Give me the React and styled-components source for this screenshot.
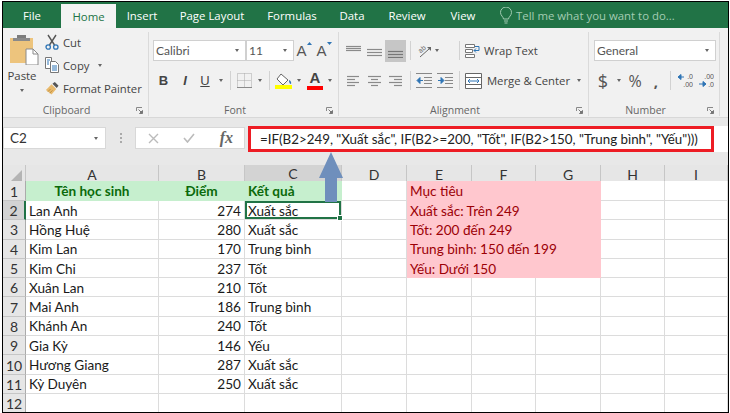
import styled, { createGlobalStyle } from "styled-components";

const GREEN = "#217346";

const columns = ["A", "B", "C", "D", "E", "F", "G", "H", "I"];
const template = "23px 133px 86px 97px 65px 65px 64px 65px 64px 63px";

const students = [
  ["Lan Anh", 274, "Xuất sắc"],
  ["Hồng Huệ", 280, "Xuất sắc"],
  ["Kim Lan", 170, "Trung bình"],
  ["Kim Chi", 237, "Tốt"],
  ["Xuân Lan", 210, "Tốt"],
  ["Mai Anh", 186, "Trung bình"],
  ["Khánh An", 240, "Tốt"],
  ["Gia Kỳ", 146, "Yếu"],
  ["Hương Giang", 287, "Xuất sắc"],
  ["Kỳ Duyên", 250, "Xuất sắc"],
];

const targets = [
  "Xuất sắc: Trên 249",
  "Tốt: 200 đến 249",
  "Trung bình: 150 đến 199",
  "Yếu: Dưới 150",
];

const GlobalStyle = createGlobalStyle`
  html, body {
    margin: 0;
    padding: 0;
    background: #fff;
  }
`;

const Frame = styled.div`
  position: relative;
  box-sizing: border-box;
  width: 727px;
  height: 412px;
  margin: 1px 0 0 2px;
  border: 1px solid #000;
  overflow: hidden;
  background: #fff;
  font-family: "Open Sans", sans-serif;
`;

const TabBar = styled.div`
  display: flex;
  height: 26px;
  background: ${GREEN};
`;

const Tab = styled.div`
  width: ${(p) => p.$w}px;
  margin-top: ${(p) => (p.$active ? "2px" : "0")};
  display: flex;
  align-items: center;
  justify-content: center;
  font-size: 11.4px;
  color: ${(p) => (p.$active ? GREEN : "#fff")};
  background: ${(p) => (p.$active ? "#f3f3f3" : "transparent")};
`;

const TellMe = styled.div`
  display: flex;
  align-items: center;
  gap: 3px;
  margin-left: 11px;
  font-size: 11.4px;
  color: #a3ccb3;
`;

const Ribbon = styled.div`
  box-sizing: border-box;
  display: flex;
  height: 90px;
  padding: 4px 0 1px;
  background: #f1f1f1;
  border-bottom: 1px solid #d8d8d8;
`;

const Group = styled.div`
  box-sizing: border-box;
  width: ${(p) => p.$w}px;
  margin-right: 1px;
  display: flex;
  flex-direction: column;
  border-right: 1px solid #dadada;
`;

const GroupBody = styled.div`
  flex: 1;
  display: flex;
  flex-direction: column;
  gap: 9px;
  padding: 8px 0 0 ${(p) => p.$pl ?? 3}px;
`;

const ClipboardBody = styled.div`
  flex: 1;
  display: flex;
`;

const PasteButton = styled.div`
  width: 42px;
  display: flex;
  flex-direction: column;
  align-items: center;
  padding-top: 2px;
  font-size: 11.4px;
  color: #444;
  line-height: 15px;
  gap: 6px;

  span {
    margin: -1px 4px 0 0;
  }
`;

const PasteInner = styled.div`
  display: flex;
  flex-direction: column;
  align-items: center;
  gap: 4px;
`;

const SmallStack = styled.div`
  display: flex;
  flex-direction: column;
  gap: 7px;
  padding-top: 2px;
`;

const SmallButton = styled.div`
  display: flex;
  align-items: center;
  height: 16px;
  gap: 4px;
  font-size: 11.3px;
  color: #444;
  white-space: nowrap;
`;

const Row = styled.div`
  display: flex;
  align-items: center;
  height: ${(p) => p.$h || 21}px;
`;

const Slot = styled.div`
  width: ${(p) => p.$w}px;
  height: ${(p) => (p.$active ? "22px" : "auto")};
  flex-shrink: 0;
  display: flex;
  align-items: center;
  justify-content: center;
  background: ${(p) => (p.$active ? "#c6c6c6" : "transparent")};
`;

const Combo = styled.div`
  box-sizing: border-box;
  width: ${(p) => p.$w}px;
  height: 21px;
  flex-shrink: 0;
  margin-left: ${(p) => p.$ml || 0}px;
  display: flex;
  align-items: center;
  justify-content: space-between;
  padding: 0 6px 0 2px;
  background: #fff;
  border: 1px solid #d0d0d0;
  font-family: "Lato", sans-serif;
  font-size: 12px;
  color: #555;
`;

const Caret = styled.div`
  width: 0;
  height: 0;
  border-left: 2.5px solid transparent;
  border-right: 2.5px solid transparent;
  border-top: 3px solid #666;
  flex-shrink: 0;
`;

const PasteCaret = styled(Caret)`
  margin-right: 4px;
`;

const VDivider = styled.div`
  width: 1px;
  height: 19px;
  background: #d2d2d2;
`;

const FontButton = styled.span`
  font-family: "Liberation Sans", sans-serif;
  font-size: ${(p) => p.$size || 13}px;
  font-weight: ${(p) => (p.$bold ? 700 : 400)};
  font-style: ${(p) => (p.$italic ? "italic" : "normal")};
  text-decoration: ${(p) => (p.$under ? "underline" : "none")};
  color: #444;
`;

const GrowButton = styled.div`
  display: flex;
  align-items: flex-start;
  font-family: "Liberation Sans", sans-serif;
  font-size: 15px;
  color: #555;
`;

const ColorStack = styled.div`
  display: flex;
  flex-direction: column;
  align-items: center;
  height: 19px;

  span {
    line-height: 14px;
  }

  svg {
    display: block;
    margin-top: 1px;
  }
`;

const NumberMark = styled.span`
  font-family: "Open Sans", sans-serif;
  font-size: ${(p) => p.$size || 14}px;
  font-weight: ${(p) => (p.$bold ? 700 : 400)};
  color: #555;
`;

const WrapLabel = styled.span`
  margin-left: 1px;
  font-size: 11.3px;
  color: #444;
  white-space: nowrap;
`;

const LabelRow = styled.div`
  display: flex;
  align-items: center;
  height: 12px;
`;

const GroupLabel = styled.div`
  flex: 1;
  text-align: center;
  font-size: 10.5px;
  color: #666;
`;

const LauncherSlot = styled.div`
  width: 18px;
  display: flex;
  justify-content: center;
`;

const FormulaBar = styled.div`
  box-sizing: border-box;
  height: 47px;
  display: flex;
  align-items: flex-start;
  padding-top: 9px;
  background: #e8e8e8;
`;

const NameBox = styled.div`
  box-sizing: border-box;
  width: 103px;
  height: 22px;
  display: flex;
  align-items: center;
  justify-content: space-between;
  padding: 0 7px 0 6px;
  background: #fff;
  font-family: "Lato", sans-serif;
  font-size: 13.5px;
  color: #333;
  border: 1px solid #d8d8d8;
`;

const Dots = styled.div`
  width: 29px;
  height: 22px;
  display: flex;
  flex-direction: column;
  align-items: center;
  justify-content: center;
  gap: 2px;

  i {
    width: 2px;
    height: 2px;
    background: #aaa;
  }
`;

const FxBox = styled.div`
  box-sizing: border-box;
  width: 110px;
  height: 22px;
  display: flex;
  align-items: center;
  justify-content: space-between;
  padding: 0 11px 0 12px;
  background: #fff;
  border: 1px solid #d8d8d8;
`;

const FxMark = styled.span`
  font-family: "Liberation Serif", serif;
  font-style: italic;
  font-weight: 700;
  font-size: 16px;
  color: #666;
`;

const FormulaField = styled.div`
  flex: 1;
  margin: -1px 0 0 3px;
  height: 26px;
  background: #fff;
`;

const FormulaBox = styled.div`
  box-sizing: border-box;
  width: 466px;
  height: 26px;
  display: flex;
  align-items: center;
  padding-left: 9px;
  border: 3px solid #ed1c24;
  font-family: "Lato", sans-serif;
  font-size: 13.35px;
  color: #222;
  white-space: nowrap;
`;

const SheetRow = styled.div`
  display: grid;
  grid-template-columns: ${template};
  height: ${(p) => p.$h || 19.3}px;
`;

const Corner = styled.div`
  display: flex;
  align-items: flex-end;
  justify-content: flex-end;
  padding: 0 3px 3px 0;
  background: #e6e6e6;
  border-right: 1px solid #c6c6c6;
  border-bottom: 1px solid #ababab;
`;

const ColHead = styled.div`
  box-sizing: border-box;
  display: flex;
  align-items: center;
  justify-content: center;
  padding-bottom: 1px;
  font-family: "Lato", sans-serif;
  font-size: 14px;
  color: #333;
  background: ${(p) => (p.$selected ? "#d3d3d3" : "#e6e6e6")};
  border-right: 1px solid #c6c6c6;
  border-bottom: ${(p) => (p.$selected ? `2px solid ${GREEN}` : "1px solid #ababab")};
`;

const RowHead = styled.div`
  box-sizing: border-box;
  display: flex;
  align-items: center;
  justify-content: center;
  padding-top: 1px;
  font-family: "Lato", sans-serif;
  font-size: 14px;
  color: #333;
  background: ${(p) => (p.$selected ? "#d3d3d3" : "#e6e6e6")};
  border-right: ${(p) => (p.$selected ? `2px solid ${GREEN}` : "1px solid #ababab")};
  border-bottom: 1px solid #c6c6c6;
`;

const Cell = styled.div`
  box-sizing: border-box;
  position: relative;
  grid-column: span ${(p) => p.$span || 1};
  display: flex;
  align-items: center;
  justify-content: ${(p) => (p.$align === "right" ? "flex-end" : p.$align === "center" ? "center" : "flex-start")};
  padding: 1px 3px 0;
  font-family: "Lato", sans-serif;
  font-size: 13.6px;
  font-weight: ${(p) => (p.$bold ? 700 : 400)};
  white-space: nowrap;
  color: ${(p) => p.$color || "#1a1a1a"};
  background: ${(p) => p.$fill || "#fff"};
  border-right: 1px solid ${(p) => p.$fill || "#dcdcdc"};
  border-bottom: 1px solid ${(p) => p.$fill || "#dcdcdc"};
`;

const SelectedCell = styled(Cell)`
  box-shadow: inset 0 0 0 2px ${GREEN};

  &::after {
    content: "";
    position: absolute;
    right: -2px;
    bottom: -2px;
    width: 4px;
    height: 4px;
    background: ${GREEN};
    border: 1px solid #fff;
    z-index: 1;
  }
`;

const Arrow = styled.svg`
  position: absolute;
  left: 316px;
  top: 150px;
  z-index: 2;
`;

const PasteIcon = () => (
  <svg width="30" height="31" viewBox="0 0 30 31">
    <rect x="1" y="4" width="23" height="25" fill="#edc47d" />
    <rect x="8" y="1" width="9" height="5" fill="#7c7c7c" />
    <rect x="4" y="4" width="17" height="3" fill="#8a8a8a" />
    <path d="M17 15h7l5 5v11H17z" fill="#fff" stroke="#8a8a8a" />
    <path d="M24 15v5h5" fill="none" stroke="#8a8a8a" />
  </svg>
);

const CutIcon = () => (
  <svg width="14" height="16" viewBox="0 0 14 16">
    <path d="M3 1l6.5 10M11 1L4.5 11" stroke="#555" strokeWidth="1.4" fill="none" />
    <circle cx="3.2" cy="13" r="2.2" fill="none" stroke="#2f75b5" strokeWidth="1.3" />
    <circle cx="10.8" cy="13" r="2.2" fill="none" stroke="#2f75b5" strokeWidth="1.3" />
  </svg>
);

const CopyIcon = () => (
  <svg width="14" height="16" viewBox="0 0 14 16">
    <path d="M.5.5h6v11h-6z" fill="#fff" stroke="#777" />
    <path d="M5.5 4.5h5l3 3v8h-8z" fill="#fff" stroke="#777" />
    <path d="M2 3h3M2 5h2M2 7h2M7 9h5M7 11h5M7 13h5" stroke="#2f75b5" />
  </svg>
);

const PainterIcon = () => (
  <svg width="14" height="15" viewBox="0 0 15 15">
    <path d="M7 3l5 5-5 6-6-5z" fill="#e8b96c" />
    <path d="M8 2.5l4.5 4.5 2-2.5-4-4z" fill="#555" />
    <path d="M3 11l3-3M5 12.5l3-3" stroke="#b98b3e" />
  </svg>
);

const BorderIcon = () => (
  <svg width="15" height="15" viewBox="0 0 15 15">
    <path d="M.5.5h14v14H.5zM7.5.5v14M.5 7.5h14" fill="none" stroke="#a8a8a8" strokeDasharray="1 1" />
    <path d="M0 14.5h15" stroke="#8a8a8a" />
  </svg>
);

const FillIcon = () => (
  <svg width="19" height="16" viewBox="0 0 19 16">
    <path d="M7 1l7 6-5 5-6-6z" fill="#fff" stroke="#666" />
    <path d="M15 7c2 1 2.5 2.5 2 4-1 0-2-1-2-4z" fill="#2f75b5" />
    <rect x="1" y="12" width="17" height="4" fill="#ffff00" />
  </svg>
);

const ColorBar = () => (
  <svg width="16" height="4" viewBox="0 0 16 4">
    <rect width="16" height="4" fill="#ff0000" />
  </svg>
);

const Lines = ({ rows, width = 15, height = 14, color = "#8a8a8a" }) => (
  <svg width={width} height={height} viewBox={`0 0 ${width} ${height}`}>
    {rows.map(([x1, x2, y]) => (
      <path key={y} d={`M${x1} ${y}.5H${x2}`} stroke={color} strokeWidth="1.2" />
    ))}
  </svg>
);

const OrientationIcon = () => (
  <svg width="16" height="15" viewBox="0 0 16 15">
    <text x="2" y="8.5" transform="rotate(-40 6 6)" fontFamily="Liberation Sans" fontSize="7" fill="#666">ab</text>
    <path d="M4 14L13 6" stroke="#666" />
    <path d="M11 4h4v4z" fill="#666" />
  </svg>
);

const IndentIcon = ({ flip }) => (
  <svg width="16" height="15" viewBox="0 0 16 15">
    <path d="M0 .5h16M0 14.5h16M8 4.5h8M8 7.5h8M8 10.5h8" stroke="#888" />
    <path
      d={flip ? "M1 7.5h3M4 4.5l3 3-3 3z" : "M7 7.5H4M4 4.5l-3 3 3 3z"}
      fill="#2f75b5"
      stroke="#2f75b5"
    />
  </svg>
);

const WrapIcon = () => (
  <svg width="16" height="16" viewBox="0 0 16 16">
    <path d="M.5 1.5h9v3h-9zM.5 6.5h7v3h-7zM.5 11.5h9v3h-9z" fill="#fff" stroke="#777" />
    <path d="M10 3.5h4v4h-5M11 5.5l-2 2 2 2" fill="none" stroke="#2f75b5" />
  </svg>
);

const MergeIcon = () => (
  <svg width="17" height="16" viewBox="0 0 17 16">
    <path d="M.5.5h16v15H.5zM.5 4.5h16M.5 11.5h16" fill="#fff" stroke="#666" />
    <path d="M3 8h11M5 6l-2 2 2 2M12 6l2 2-2 2" fill="none" stroke="#2f75b5" />
  </svg>
);

const DecimalIcon = ({ top, bottom, flip }) => (
  <svg width="16" height="15" viewBox="0 0 16 15">
    <text x="16" y="6" textAnchor="end" fontFamily="Liberation Sans" fontSize="7" fill="#555">{top}</text>
    <text x="16" y="14" textAnchor="end" fontFamily="Liberation Sans" fontSize="7" fill="#555">{bottom}</text>
    <path
      d={flip ? "M1 11h4M5 8.5l3 2.5-3 2.5z" : "M3 4h4M4 1.5L1 4l3 2.5z"}
      fill="#2f75b5"
      stroke="#2f75b5"
    />
  </svg>
);

const Launcher = () => (
  <svg width="7" height="7" viewBox="0 0 7 7">
    <path d="M.5 4V.5H6" fill="none" stroke="#888" />
    <path d="M2.5 2.5l3 3M6.5 3.5v3h-3z" stroke="#777" fill="#777" />
  </svg>
);

const BulbIcon = () => (
  <svg width="14" height="17" viewBox="0 0 14 17">
    <path d="M4.5 12c0-2-3-3.5-3-6.5a5.5 5.5 0 0 1 11 0c0 3-3 4.5-3 6.5z" fill="none" stroke="#a3ccb3" />
    <path d="M5 14h4M5.5 16h3" stroke="#a3ccb3" />
  </svg>
);

const TinyArrow = ({ down }) => (
  <svg width="5" height="3" viewBox="0 0 5 3">
    <path d={down ? "M0 0h5L2.5 3z" : "M0 3h5L2.5 0z"} fill="#2f75b5" />
  </svg>
);

function TabStrip() {
  return (
    <TabBar>
      <Tab $w={58}>File</Tab>
      <Tab $w={55} $active>Home</Tab>
      <Tab $w={52}>Insert</Tab>
      <Tab $w={88}>Page Layout</Tab>
      <Tab $w={72}>Formulas</Tab>
      <Tab $w={48}>Data</Tab>
      <Tab $w={62}>Review</Tab>
      <Tab $w={50}>View</Tab>
      <TellMe>
        <BulbIcon />
        Tell me what you want to do...
      </TellMe>
    </TabBar>
  );
}

function GroupFooter({ children }) {
  return (
    <LabelRow>
      <GroupLabel>{children}</GroupLabel>
      <LauncherSlot>
        <Launcher />
      </LauncherSlot>
    </LabelRow>
  );
}

function RibbonPanel() {
  return (
    <Ribbon>
      <Group $w={146}>
        <ClipboardBody>
          <PasteButton>
            <PasteInner>
              <PasteIcon />
              <span>Paste</span>
            </PasteInner>
            <PasteCaret />
          </PasteButton>
          <SmallStack>
            <SmallButton><CutIcon /> Cut</SmallButton>
            <SmallButton><CopyIcon /> Copy <Slot $w={14}><Caret /></Slot></SmallButton>
            <SmallButton><PainterIcon /> Format Painter</SmallButton>
          </SmallStack>
        </ClipboardBody>
        <GroupFooter>Clipboard</GroupFooter>
      </Group>

      <Group $w={189}>
        <GroupBody>
          <Row>
            <Combo $w={93}>Calibri <Caret /></Combo>
            <Combo $w={48}>11 <Caret /></Combo>
            <Slot $w={20}><GrowButton>A<TinyArrow /></GrowButton></Slot>
            <Slot $w={20}><GrowButton>A<TinyArrow down /></GrowButton></Slot>
          </Row>
          <Row>
            <Slot $w={21}><FontButton $bold>B</FontButton></Slot>
            <Slot $w={22}><FontButton $italic $bold>I</FontButton></Slot>
            <Slot $w={18}><FontButton $under>U</FontButton></Slot>
            <Slot $w={14}><Caret /></Slot>
            <Slot $w={4}><VDivider /></Slot>
            <Slot $w={24}><BorderIcon /></Slot>
            <Slot $w={8}><Caret /></Slot>
            <Slot $w={10}><VDivider /></Slot>
            <Slot $w={19}><FillIcon /></Slot>
            <Slot $w={12}><Caret /></Slot>
            <Slot $w={20}>
              <ColorStack>
                <FontButton $size={15} $bold>A</FontButton>
                <ColorBar />
              </ColorStack>
            </Slot>
            <Slot $w={10}><Caret /></Slot>
          </Row>
        </GroupBody>
        <GroupFooter>Font</GroupFooter>
      </Group>

      <Group $w={249}>
        <GroupBody>
          <Row>
            <Slot $w={21}><Lines rows={[[0, 15, 2], [0, 15, 4], [0, 15, 6]]} /></Slot>
            <Slot $w={21}><Lines rows={[[0, 15, 5], [0, 15, 8], [0, 15, 11]]} /></Slot>
            <Slot $w={21} $active><Lines rows={[[0, 15, 7], [0, 15, 10], [0, 15, 13]]} color="#777" /></Slot>
            <Slot $w={8}><VDivider /></Slot>
            <Slot $w={19}><OrientationIcon /></Slot>
            <Slot $w={8}><Caret /></Slot>
            <Slot $w={14} />
            <Slot $w={8}><VDivider /></Slot>
            <Slot $w={20}><WrapIcon /></Slot>
            <WrapLabel>Wrap Text</WrapLabel>
          </Row>
          <Row>
            <Slot $w={21}><Lines rows={[[0, 12, 2], [0, 8, 5], [0, 12, 8], [0, 8, 11]]} width={13} /></Slot>
            <Slot $w={21}><Lines rows={[[0, 13, 2], [3, 10, 5], [0, 13, 8], [3, 10, 11]]} width={13} /></Slot>
            <Slot $w={21}><Lines rows={[[0, 13, 2], [5, 13, 5], [0, 13, 8], [5, 13, 11]]} width={13} /></Slot>
            <Slot $w={8}><VDivider /></Slot>
            <Slot $w={20}><IndentIcon /></Slot>
            <Slot $w={21}><IndentIcon flip /></Slot>
            <Slot $w={8}><VDivider /></Slot>
            <Slot $w={20}><MergeIcon /></Slot>
            <Slot $w={90}><WrapLabel>Merge &amp; Center</WrapLabel></Slot>
            <Slot $w={12}><Caret /></Slot>
          </Row>
        </GroupBody>
        <GroupFooter>Alignment</GroupFooter>
      </Group>

      <Group $w={130}>
        <GroupBody $pl={0}>
          <Row>
            <Combo $w={122} $ml={4}>General <Caret /></Combo>
          </Row>
          <Row>
            <Slot $w={3} />
            <Slot $w={20}><NumberMark $size={18}>$</NumberMark></Slot>
            <Slot $w={12}><Caret /></Slot>
            <Slot $w={20}><NumberMark $size={16}>%</NumberMark></Slot>
            <Slot $w={22}><NumberMark $size={15} $bold>,</NumberMark></Slot>
            <Slot $w={6}><VDivider /></Slot>
            <Slot $w={23}><DecimalIcon top=".0" bottom=".00" /></Slot>
            <Slot $w={20}><DecimalIcon top=".00" bottom=".0" flip /></Slot>
          </Row>
        </GroupBody>
        <GroupFooter>Number</GroupFooter>
      </Group>
    </Ribbon>
  );
}

function FormulaRow() {
  return (
    <FormulaBar>
      <NameBox>C2 <Caret /></NameBox>
      <Dots><i /><i /><i /></Dots>
      <FxBox>
        <svg width="11" height="11" viewBox="0 0 11 11"><path d="M1 1l9 9M10 1l-9 9" stroke="#bbb" strokeWidth="1.4" /></svg>
        <svg width="12" height="10" viewBox="0 0 12 10"><path d="M1 5l3.5 4L11 1" stroke="#bbb" strokeWidth="1.6" fill="none" /></svg>
        <FxMark>fx</FxMark>
      </FxBox>
      <FormulaField>
        <FormulaBox>
          =IF(B2&gt;249, "Xuất sắc", IF(B2&gt;=200, "Tốt", IF(B2&gt;150, "Trung bình", "Yếu")))
        </FormulaBox>
      </FormulaField>
    </FormulaBar>
  );
}

function Sheet() {
  const headerColor = "#0b6a0b";
  const green = "#c6efce";
  const pink = "#ffc7ce";
  const pinkText = "#9c0006";

  return (
    <div>
      <SheetRow $h={16}>
        <Corner>
          <svg width="11" height="11" viewBox="0 0 11 11"><path d="M11 0v11H0z" fill="#b4b4b4" /></svg>
        </Corner>
        {columns.map((col) => (
          <ColHead key={col} $selected={col === "C"}>{col}</ColHead>
        ))}
      </SheetRow>

      <SheetRow $h={20}>
        <RowHead>1</RowHead>
        <Cell $fill={green} $color={headerColor} $bold $align="center">Tên học sinh</Cell>
        <Cell $fill={green} $color={headerColor} $bold $align="center">Điểm</Cell>
        <Cell $fill={green} $color={headerColor} $bold>Kết quả</Cell>
        <Cell />
        <Cell $fill={pink} $color={pinkText} $span={3}>Mục tiêu</Cell>
        <Cell />
        <Cell />
      </SheetRow>

      {students.map(([name, score, result], i) => {
        const target = targets[i];
        const Result = i === 0 ? SelectedCell : Cell;
        return (
          <SheetRow key={name}>
            <RowHead $selected={i === 0}>{i + 2}</RowHead>
            <Cell>{name}</Cell>
            <Cell $align="right">{score}</Cell>
            <Result>{result}</Result>
            <Cell />
            {target ? (
              <Cell $fill={pink} $color={pinkText} $span={3}>{target}</Cell>
            ) : (
              <>
                <Cell />
                <Cell />
                <Cell />
              </>
            )}
            <Cell />
            <Cell />
          </SheetRow>
        );
      })}

      <SheetRow>
        <RowHead>12</RowHead>
        {columns.map((col) => (
          <Cell key={col} />
        ))}
      </SheetRow>
    </div>
  );
}

export default function App() {
  return (
    <>
      <GlobalStyle />
      <Frame>
        <TabStrip />
        <RibbonPanel />
        <FormulaRow />
        <Sheet />
        <Arrow width="24" height="50" viewBox="0 0 24 50">
          <path d="M12 0L24 26H18V50H6V26H0z" fill="#6f8fbc" />
        </Arrow>
      </Frame>
    </>
  );
}
